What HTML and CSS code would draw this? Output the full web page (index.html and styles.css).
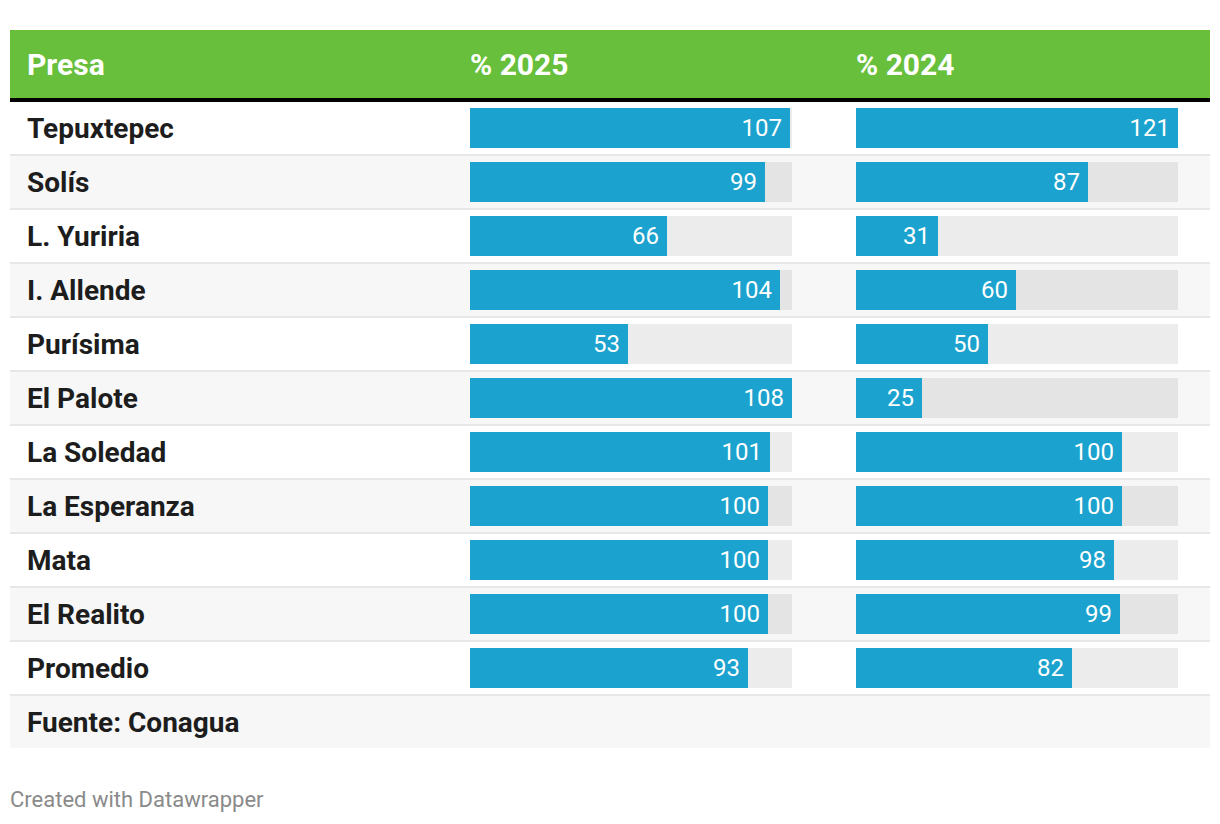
FILE: index.html
```html
<!DOCTYPE html>
<html lang="es">
<head>
<meta charset="utf-8">
<title>Presas</title>
<link rel="stylesheet" href="styles.css">
</head>
<body>
<div class="chart">
  <div class="table">
    <div class="row head">
      <div class="cell name">Presa</div>
      <div class="cell">% 2025</div>
      <div class="cell">% 2024</div>
    </div>
    <div class="row">
      <div class="cell name">Tepuxtepec</div>
      <div class="cell"><div class="track"><div class="fill" style="width:320px">107</div></div></div>
      <div class="cell"><div class="track"><div class="fill" style="width:322px">121</div></div></div>
    </div>
    <div class="row alt">
      <div class="cell name">Solís</div>
      <div class="cell"><div class="track"><div class="fill" style="width:295px">99</div></div></div>
      <div class="cell"><div class="track"><div class="fill" style="width:232px">87</div></div></div>
    </div>
    <div class="row">
      <div class="cell name">L. Yuriria</div>
      <div class="cell"><div class="track"><div class="fill" style="width:197px">66</div></div></div>
      <div class="cell"><div class="track"><div class="fill" style="width:82px">31</div></div></div>
    </div>
    <div class="row alt">
      <div class="cell name">I. Allende</div>
      <div class="cell"><div class="track"><div class="fill" style="width:310px">104</div></div></div>
      <div class="cell"><div class="track"><div class="fill" style="width:160px">60</div></div></div>
    </div>
    <div class="row">
      <div class="cell name">Purísima</div>
      <div class="cell"><div class="track"><div class="fill" style="width:158px">53</div></div></div>
      <div class="cell"><div class="track"><div class="fill" style="width:132px">50</div></div></div>
    </div>
    <div class="row alt">
      <div class="cell name">El Palote</div>
      <div class="cell"><div class="track"><div class="fill" style="width:322px">108</div></div></div>
      <div class="cell"><div class="track"><div class="fill" style="width:66px">25</div></div></div>
    </div>
    <div class="row">
      <div class="cell name">La Soledad</div>
      <div class="cell"><div class="track"><div class="fill" style="width:300px">101</div></div></div>
      <div class="cell"><div class="track"><div class="fill" style="width:266px">100</div></div></div>
    </div>
    <div class="row alt">
      <div class="cell name">La Esperanza</div>
      <div class="cell"><div class="track"><div class="fill" style="width:298px">100</div></div></div>
      <div class="cell"><div class="track"><div class="fill" style="width:266px">100</div></div></div>
    </div>
    <div class="row">
      <div class="cell name">Mata</div>
      <div class="cell"><div class="track"><div class="fill" style="width:298px">100</div></div></div>
      <div class="cell"><div class="track"><div class="fill" style="width:258px">98</div></div></div>
    </div>
    <div class="row alt">
      <div class="cell name">El Realito</div>
      <div class="cell"><div class="track"><div class="fill" style="width:298px">100</div></div></div>
      <div class="cell"><div class="track"><div class="fill" style="width:264px">99</div></div></div>
    </div>
    <div class="row">
      <div class="cell name">Promedio</div>
      <div class="cell"><div class="track"><div class="fill" style="width:278px">93</div></div></div>
      <div class="cell"><div class="track"><div class="fill" style="width:216px">82</div></div></div>
    </div>
    <div class="row alt foot">
      <div class="cell name">Fuente: Conagua</div>
      <div class="cell"></div>
      <div class="cell"></div>
    </div>
  </div>
  <div class="credit">Created with Datawrapper</div>
</div>
</body>
</html>
```

FILE: styles.css
```css
html, body {
  margin: 0;
  padding: 0;
  background: #ffffff;
}

body {
  font-family: Roboto, "Liberation Sans", sans-serif;
  color: #1d1d1d;
}

.chart {
  padding: 30px 10px 0 10px;
}

.table {
  width: 1200px;
}

.row {
  display: grid;
  grid-template-columns: 443px 386px 1fr;
  align-items: center;
  height: 52px;
  padding-left: 17px;
  border-bottom: 2px solid #e7e7e7;
  background: #ffffff;
}

.row.alt {
  background: #f7f7f7;
}

.row.head {
  height: 68px;
  background: #67bf3b;
  border-bottom: 4px solid #000000;
}

.row.head .cell {
  color: #ffffff;
  font-weight: 700;
  font-size: 30px;
}

.row.foot {
  border-bottom: none;
}

.cell {
  font-size: 24px;
}

.cell.name {
  font-weight: 700;
  font-size: 28px;
  color: #1d1d1d;
}

.track {
  width: 322px;
  height: 40px;
  background: rgba(0, 0, 0, 0.075);
}

.fill {
  height: 40px;
  background: #1ba2ce;
  color: #ffffff;
  font-size: 24px;
  line-height: 40px;
  text-align: right;
  padding-right: 8px;
  box-sizing: border-box;
}

.credit {
  margin-top: 40px;
  font-size: 22px;
  line-height: 24px;
  color: #8a8a8a;
}
```
